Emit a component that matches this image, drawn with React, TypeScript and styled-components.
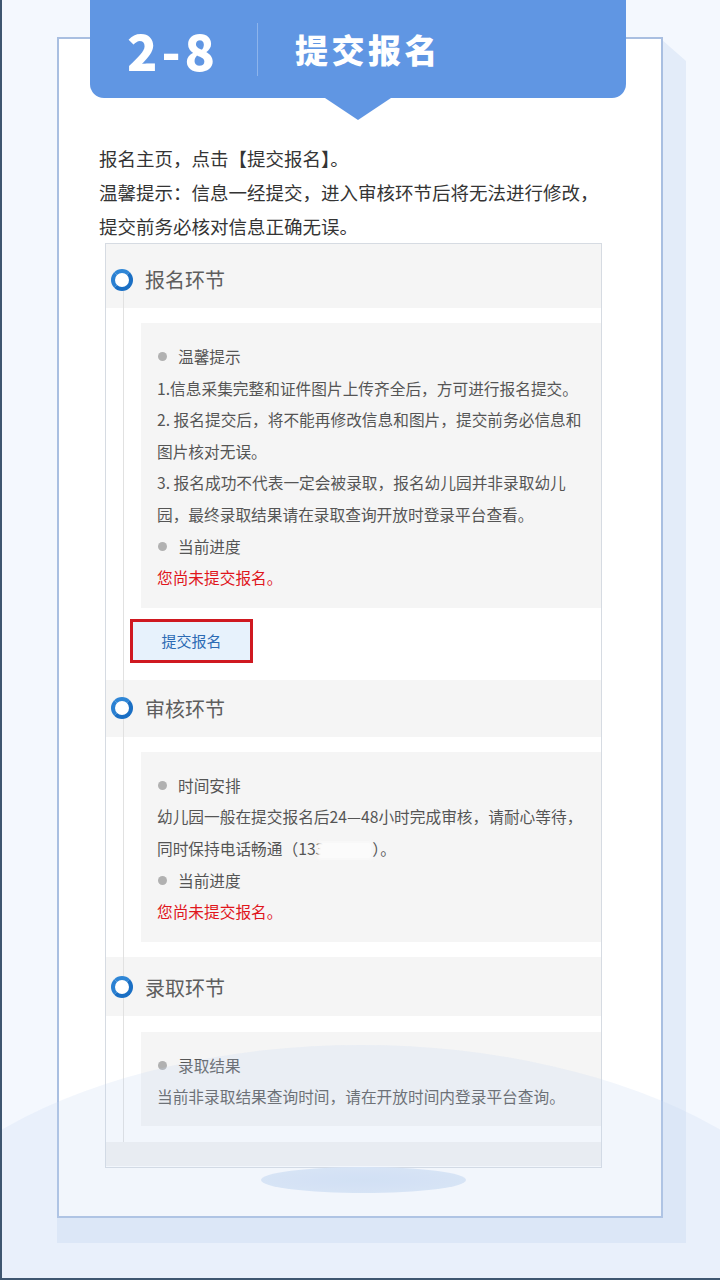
import React from 'react';
import styled, { createGlobalStyle } from 'styled-components';

const GlobalStyle = createGlobalStyle`
    html, body {
        margin: 0;
        padding: 0;
    }
    body {
        background: #f4f8fe;
        font-family: "Noto Sans CJK SC", "Noto Sans", sans-serif;
    }
`;

const Page = styled.div`
    position: relative;
    width: 720px;
    height: 1280px;
    box-sizing: border-box;
    border-left: 2px solid #3e5670;
    border-bottom: 2px solid #3e5670;
    padding-top: 37px;
    overflow: hidden;
`;

const Card = styled.div`
    position: relative;
    margin-left: 55px;
    width: 606px;
    height: 1181px;
    box-sizing: border-box;
    border: 2px solid #a9bfe1;
    background: #fff;
    display: flex;
    flex-direction: column;

    &::before {
        content: '';
        position: absolute;
        left: -2px;
        top: 0;
        right: -25px;
        bottom: -27px;
        background: #e3ecf9;
        clip-path: polygon(calc(100% - 25px) 0, 100% 22px, 100% 100%, 0 100%, 0 0);
        z-index: -1;
    }
`;

const Tab = styled.div`
    position: relative;
    margin-top: -39px;
    margin-left: 31px;
    width: 536px;
    height: 98px;
    box-sizing: border-box;
    background: #6096e3;
    border-radius: 0 0 14px 14px;
    display: flex;
    align-items: center;
    padding-left: 37px;
    color: #fff;

    &::after {
        content: '';
        position: absolute;
        left: 50%;
        bottom: -22px;
        transform: translateX(-50%);
        border-left: 33px solid transparent;
        border-right: 33px solid transparent;
        border-top: 22px solid #6096e3;
    }
`;

const StepNo = styled.span`
    font-size: 50px;
    font-weight: 900;
    letter-spacing: 4px;
    line-height: 1;
`;

const TabDivider = styled.span`
    width: 1px;
    height: 53px;
    margin: 0 37px 0 38px;
    background: #8db4ec;
`;

const TabTitle = styled.span`
    font-size: 33px;
    font-weight: 900;
    letter-spacing: 3.5px;
    line-height: 1;
`;

const Intro = styled.div`
    margin: 43px 0 0 40px;
    font-size: 18.5px;
    line-height: 34px;
    color: #343434;
    white-space: nowrap;
`;

const Shot = styled.div`
    margin-left: 46px;
    width: 497px;
    height: 925px;
    box-sizing: border-box;
    border: 1px solid #d6dbe2;
    background: #fff;
    display: flex;
    flex-direction: column;
    color: #555;
`;

const Timeline = styled.div`
    position: relative;
    display: flex;
    flex-direction: column;
    padding-bottom: 16px;

    &::before {
        content: '';
        position: absolute;
        left: 17px;
        top: 47px;
        bottom: 0;
        width: 1px;
        background: #e1e1e1;
    }
`;

const StageHeader = styled.div<{ $h: number; $top?: number; $mt?: number }>`
    height: ${p => p.$h}px;
    box-sizing: border-box;
    margin-top: ${p => p.$mt ?? 0}px;
    padding-top: ${p => p.$top ?? 0}px;
    background: #f5f5f5;
    display: flex;
    align-items: center;
`;

const Ring = styled.span`
    position: relative;
    z-index: 1;
    width: 22px;
    height: 22px;
    box-sizing: border-box;
    margin-left: 5px;
    border-radius: 50%;
    border: 4px solid #1a6fc4;
    border-top-color: #2f86d6;
    border-left-color: #2a80d2;
    background: #fff;
`;

const StageTitle = styled.span`
    margin-left: 12px;
    font-size: 20px;
    color: #5e5e5e;
`;

const InfoBox = styled.div<{ $mt: number; $pb: number }>`
    margin: ${p => p.$mt}px 0 0 35px;
    padding: 18px 0 ${p => p.$pb}px 16px;
    background: #f5f5f5;
    font-size: 15.7px;
    letter-spacing: 0;
    line-height: 31.6px;
    white-space: nowrap;
`;

const Line = styled.div<{ $red?: boolean }>`
    color: ${p => (p.$red ? '#e0161c' : '#555')};
`;

const Bullet = styled.div`
    display: flex;
    align-items: center;
`;

const Dot = styled.span`
    width: 9px;
    height: 9px;
    margin: 0 11px 0 1px;
    border-radius: 50%;
    background: #b1b1b1;
`;

const Mask = styled.span`
    display: inline-block;
    vertical-align: middle;
    width: 54px;
    height: 17px;
    margin-left: -6px;
    background: #fbfbfb;
    filter: blur(1.5px);
`;

const ButtonRow = styled.div`
    margin: 11px 0 0 24px;
    display: flex;
`;

const SubmitButton = styled.button`
    width: 123px;
    height: 44px;
    box-sizing: border-box;
    border: 3px solid #cf1820;
    background: #e7f2fc;
    color: #2c6bb4;
    font-family: inherit;
    font-size: 15px;
    padding: 0;
`;

const ShotFooter = styled.div`
    height: 24px;
    background: #f3f3f3;
`;

const Puddle = styled.div`
    margin: -1px 0 0 202px;
    width: 205px;
    height: 26px;
    border-radius: 50%;
    background: radial-gradient(ellipse at center, #d6e3f5 0%, #dbe7f7 60%, #e3ecf9 100%);
`;

const Arc = styled.div`
    position: absolute;
    left: 50%;
    top: 1045px;
    width: 1000px;
    height: 556px;
    transform: translateX(-50%);
    border-radius: 50%;
    background: rgba(196, 214, 242, 0.22);
    pointer-events: none;
`;

const Item = ({ children }: { children: React.ReactNode }) => (
    <Bullet><Dot />{children}</Bullet>
);

export default function App() {
    return (
        <Page>
            <GlobalStyle />
            <Card>
                <Tab>
                    <StepNo>2-8</StepNo>
                    <TabDivider />
                    <TabTitle>提交报名</TabTitle>
                </Tab>
                <Intro>
                    <div>报名主页，点击【提交报名】。</div>
                    <div>温馨提示：信息一经提交，进入审核环节后将无法进行修改，</div>
                    <div>提交前务必核对信息正确无误。</div>
                </Intro>
                <Shot>
                    <Timeline>
                        <StageHeader $h={64} $top={7}>
                            <Ring />
                            <StageTitle>报名环节</StageTitle>
                        </StageHeader>
                        <InfoBox $mt={15} $pb={14}>
                            <Item>温馨提示</Item>
                            <Line>1.信息采集完整和证件图片上传齐全后，方可进行报名提交。</Line>
                            <Line>2. 报名提交后，将不能再修改信息和图片，提交前务必信息和</Line>
                            <Line>图片核对无误。</Line>
                            <Line>3. 报名成功不代表一定会被录取，报名幼儿园并非录取幼儿</Line>
                            <Line>园，最终录取结果请在录取查询开放时登录平台查看。</Line>
                            <Item>当前进度</Item>
                            <Line $red>您尚未提交报名。</Line>
                        </InfoBox>
                        <ButtonRow>
                            <SubmitButton>提交报名</SubmitButton>
                        </ButtonRow>
                        <StageHeader $h={57} $mt={17}>
                            <Ring />
                            <StageTitle>审核环节</StageTitle>
                        </StageHeader>
                        <InfoBox $mt={15} $pb={14}>
                            <Item>时间安排</Item>
                            <Line>幼儿园一般在提交报名后24—48小时完成审核，请耐心等待，</Line>
                            <Line>同时保持电话畅通（133<Mask />）。</Line>
                            <Item>当前进度</Item>
                            <Line $red>您尚未提交报名。</Line>
                        </InfoBox>
                        <StageHeader $h={59} $mt={15} $top={2}>
                            <Ring />
                            <StageTitle>录取环节</StageTitle>
                        </StageHeader>
                        <InfoBox $mt={16} $pb={13}>
                            <Item>录取结果</Item>
                            <Line>当前非录取结果查询时间，请在开放时间内登录平台查询。</Line>
                        </InfoBox>
                    </Timeline>
                    <ShotFooter />
                </Shot>
                <Puddle />
            </Card>
            <Arc />
        </Page>
    );
}
